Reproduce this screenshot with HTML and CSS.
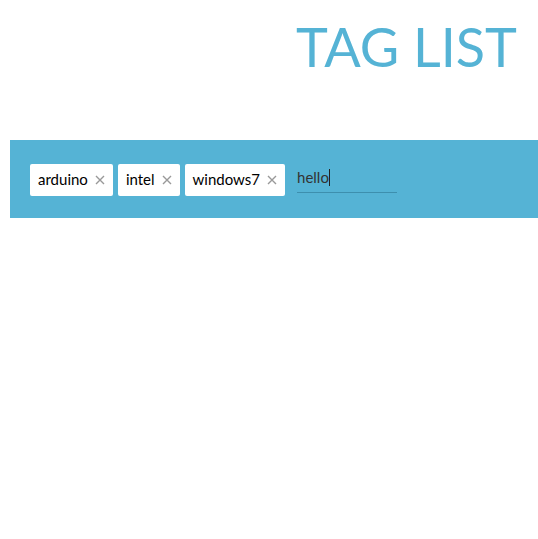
FILE: index.html
```html
<!DOCTYPE html>
<html>
<head>
<meta charset="utf-8">
<link rel="stylesheet" href="styles.css">
</head>
<body>
<h1 class="title">TAG LIST</h1>
<div class="tagbar">
  <span class="tag">arduino<svg class="x" viewBox="0 0 10 10" width="10" height="10"><path d="M1 1L9 9M9 1L1 9"/></svg></span>
  <span class="tag">intel<svg class="x" viewBox="0 0 10 10" width="10" height="10"><path d="M1 1L9 9M9 1L1 9"/></svg></span>
  <span class="tag">windows7<svg class="x" viewBox="0 0 10 10" width="10" height="10"><path d="M1 1L9 9M9 1L1 9"/></svg></span>
  <span class="input">hello<span class="caret"></span></span>
</div>
</body>
</html>
```
FILE: styles.css
```css
html, body { margin: 0; padding: 0; background: #fff; }
body { font-family: Lato, "Open Sans", sans-serif; }
.title {
  margin: 0;
  padding: 12px 21px 0 0;
  text-align: right;
  font-family: Lato, sans-serif;
  font-weight: 400;
  font-size: 54px;
  line-height: 70px;
  color: #55b3d5;
}
.tagbar {
  margin: 58px 0 0 10px;
  background: #55b3d5;
  height: 78px;
  padding: 24px 20px 0 20px;
  box-sizing: border-box;
  display: flex;
  align-items: flex-start;
  gap: 5px;
}
.tag {
  background: #fff;
  border-radius: 2px;
  height: 32px;
  box-sizing: border-box;
  padding: 0 8px 2px 8px;
  display: flex;
  align-items: center;
  font-size: 15px;
  color: #000;
}
.x { margin-left: 7px; stroke: #999; stroke-width: 1.4; fill: none; margin-top: 2px; }
.input {
  margin-left: 7px;
  width: 100px;
  height: 29px;
  box-sizing: border-box;
  padding-bottom: 2px;
  border-bottom: 1px solid #3d8fae;
  display: flex;
  align-items: center;
  font-size: 15px;
  color: #333;
}
.caret { display: inline-block; width: 1px; height: 17px; background: #222; }
```
